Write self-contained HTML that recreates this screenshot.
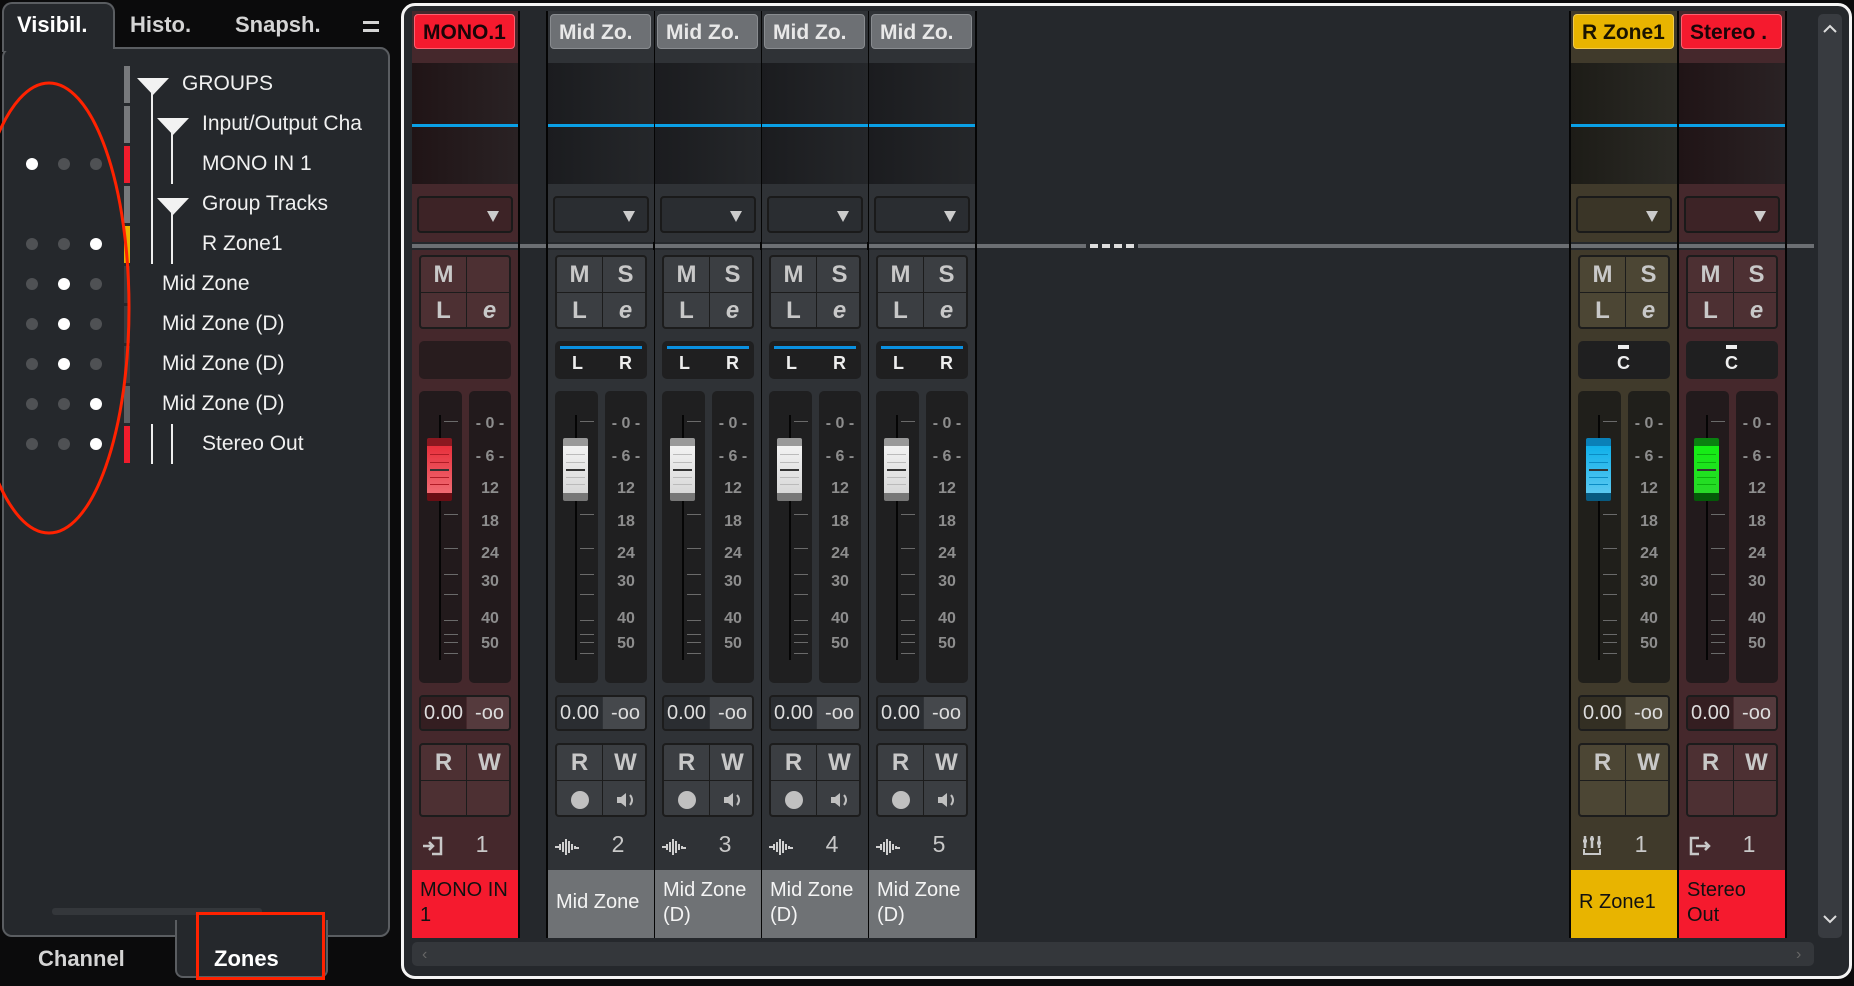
<!DOCTYPE html>
<html><head><meta charset="utf-8">
<style>
*{box-sizing:border-box;margin:0;padding:0}
body{width:1854px;height:986px;background:#0b0b0c;position:relative;overflow:hidden;font-family:"Liberation Sans",sans-serif;}
.a{position:absolute}
.tab{position:absolute;font-weight:bold;font-size:22px;color:#d4d4d4}
#lp{left:2px;top:47px;width:388px;height:890px;background:#25282c;border:2px solid #5a5d61;border-radius:10px}
.row{position:absolute;font-size:21px;color:#f0f0f0;white-space:nowrap}
.dot{position:absolute;width:12px;height:12px;border-radius:50%;background:#4f5154}
.dot.on{background:#fff}
.bar{position:absolute;left:124px;width:6px;height:37px}
.vl{position:absolute;width:2px;background:#eee}
.tri{position:absolute;width:0;height:0;border-left:16px solid transparent;border-right:16px solid transparent;border-top:17px solid #f2f2f2}
#mx{left:401px;top:3px;width:1451px;height:976px;border:3px solid #f4f4f4;border-radius:14px;background:#25282c;overflow:hidden}
.s{position:absolute;top:0;width:106px;height:940px}
.s .top{position:absolute;left:0;top:11px;width:106px;height:231px}
.s .bot{position:absolute;left:0;top:250px;width:106px;height:620px}
.lbl{position:absolute;left:2px;top:14px;width:101px;height:35px;border-radius:4px;font-weight:bold;font-size:21px;line-height:35px;padding-left:8px;white-space:nowrap;overflow:hidden}
.ins{position:absolute;left:0;top:63px;width:106px;height:121px}
.blue{position:absolute;left:0;top:124px;width:106px;height:3px;background:#0aa0e6}
.dd{position:absolute;left:5px;top:196px;width:96px;height:37px;border:2px solid #1a1a1a;border-radius:4px}
.dd:after{content:"";position:absolute;right:12px;top:13px;border-left:6px solid transparent;border-right:6px solid transparent;border-top:11px solid #ccc}
.g{position:absolute;left:7px;width:92px;height:74px;border:2px solid #1c1c1c;border-radius:4px;overflow:hidden}
.g div{position:absolute;width:45px;height:35px;font-weight:bold;font-size:24px;color:#c8c8c8;text-align:center;line-height:35px}
.g .c1{left:0;top:0}.g .c2{left:46px;top:0}.g .c3{left:0;top:36px}.g .c4{left:46px;top:36px}
.pan{position:absolute;left:7px;top:341px;width:92px;height:38px;background:#1f1f20;border-radius:5px}
.fb{position:absolute;left:7px;top:391px;width:43px;height:292px;background:#1f1f20;border-radius:5px}
.mb{position:absolute;left:57px;top:391px;width:42px;height:292px;background:#1f1f20;border-radius:5px}
.trk{position:absolute;left:27px;top:415px;width:2px;height:245px;background:#050505}
.tk{position:absolute;left:32px;width:14px;height:1px;background:#6a6a6a}
.cap{position:absolute;left:15px;top:438px;width:25px;height:63px;border-radius:2px}
.cap i{position:absolute;left:3px;width:19px;height:1px}
.sc{position:absolute;width:42px;text-align:center;left:57px;font-weight:bold;font-size:16px;color:#8d8d8d;white-space:nowrap}
.vol{position:absolute;left:7px;top:695px;width:92px;height:36px;border:2px solid #1c1c1c;border-radius:4px;overflow:hidden;font-size:20px;color:#ddd}
.vol span{position:absolute;top:0;height:32px;line-height:32px;width:45px;text-align:center}
.num{position:absolute;left:55px;top:831px;width:30px;text-align:center;font-size:23px;color:#c8c8c8}
.nm{position:absolute;left:0;top:870px;width:106px;height:68px;font-size:20px;line-height:25px;padding:8px 0 0 8px}
.sep{position:absolute;top:11px;width:2px;height:927px;background:#050505}
</style></head><body>

<div class="a" style="left:2px;top:2px;width:113px;height:50px;background:#25282c;border:2px solid #5a5d61;border-bottom:none;border-radius:10px 10px 0 0"></div>
<div class="tab" style="left:17px;top:12px;color:#fff">Visibil.</div>
<div class="tab" style="left:130px;top:12px">Histo.</div>
<div class="tab" style="left:235px;top:12px">Snapsh.</div>
<div class="a" style="left:363px;top:21px;width:16px;height:3px;background:#d4d4d4"></div>
<div class="a" style="left:363px;top:29px;width:16px;height:3px;background:#d4d4d4"></div>
<div class="a" id="lp"></div>
<div class="a" style="left:4px;top:45px;width:109px;height:6px;background:#25282c"></div>

<div class="dot on" style="left:26px;top:158px"></div><div class="dot" style="left:58px;top:158px"></div><div class="dot" style="left:90px;top:158px"></div>
<div class="dot" style="left:26px;top:238px"></div><div class="dot" style="left:58px;top:238px"></div><div class="dot on" style="left:90px;top:238px"></div>
<div class="dot" style="left:26px;top:278px"></div><div class="dot on" style="left:58px;top:278px"></div><div class="dot" style="left:90px;top:278px"></div>
<div class="dot" style="left:26px;top:318px"></div><div class="dot on" style="left:58px;top:318px"></div><div class="dot" style="left:90px;top:318px"></div>
<div class="dot" style="left:26px;top:358px"></div><div class="dot on" style="left:58px;top:358px"></div><div class="dot" style="left:90px;top:358px"></div>
<div class="dot" style="left:26px;top:398px"></div><div class="dot" style="left:58px;top:398px"></div><div class="dot on" style="left:90px;top:398px"></div>
<div class="dot" style="left:26px;top:438px"></div><div class="dot" style="left:58px;top:438px"></div><div class="dot on" style="left:90px;top:438px"></div>

<div class="bar" style="top:66px;background:#77797c"></div>
<div class="bar" style="top:106px;background:#77797c"></div>
<div class="bar" style="top:146px;background:#f01c2c"></div>
<div class="bar" style="top:186px;background:#77797c"></div>
<div class="bar" style="top:226px;background:#e8b400"></div>
<div class="bar" style="top:266px;background:#3a3c40"></div>
<div class="bar" style="top:306px;background:#3a3c40"></div>
<div class="bar" style="top:346px;background:#3a3c40"></div>
<div class="bar" style="top:386px;background:#5c5f63"></div>
<div class="bar" style="top:426px;background:#f01c2c"></div>

<div class="tri" style="left:137px;top:78px"></div>
<div class="vl" style="left:151px;top:92px;height:172px"></div>
<div class="tri" style="left:157px;top:118px"></div>
<div class="vl" style="left:171px;top:132px;height:52px"></div>
<div class="tri" style="left:157px;top:198px"></div>
<div class="vl" style="left:171px;top:212px;height:52px"></div>
<div class="vl" style="left:151px;top:424px;height:40px"></div>
<div class="vl" style="left:171px;top:424px;height:40px"></div>
<div class="row" style="left:182px;top:72px">GROUPS</div>
<div class="row" style="left:202px;top:112px">Input/Output Cha</div>
<div class="row" style="left:202px;top:152px">MONO IN 1</div>
<div class="row" style="left:202px;top:192px">Group Tracks</div>
<div class="row" style="left:202px;top:232px">R Zone1</div>
<div class="row" style="left:162px;top:272px">Mid Zone</div>
<div class="row" style="left:162px;top:312px">Mid Zone (D)</div>
<div class="row" style="left:162px;top:352px">Mid Zone (D)</div>
<div class="row" style="left:162px;top:392px">Mid Zone (D)</div>
<div class="row" style="left:202px;top:432px">Stereo Out</div>

<div class="a" style="left:52px;top:908px;width:210px;height:7px;background:#34373b;border-radius:3px"></div>

<svg class="a" style="left:0;top:0" width="200" height="560"><ellipse cx="49" cy="308" rx="80" ry="225" fill="none" stroke="#ff2200" stroke-width="3"/></svg>

<div class="a" style="left:175px;top:920px;width:153px;height:58px;background:#25282c;border:2px solid #5a5d61;border-top:none;border-radius:0 0 8px 8px"></div>
<div class="a" style="left:177px;top:930px;width:149px;height:10px;background:#25282c"></div>
<div class="tab" style="left:38px;top:946px">Channel</div>
<div class="tab" style="left:214px;top:946px;color:#fff">Zones</div>
<div class="a" style="left:196px;top:912px;width:129px;height:68px;border:3px solid #ff2200"></div>

<div class="a" id="mx"></div>
<div class="a" style="left:412px;top:244px;width:674px;height:4px;background:#6c6f73"></div>
<div class="a" style="left:1138px;top:244px;width:676px;height:4px;background:#6c6f73"></div>
<div class="a" style="left:1090px;top:244px;width:8px;height:4px;background:#ddd"></div>
<div class="a" style="left:1102px;top:244px;width:8px;height:4px;background:#ddd"></div>
<div class="a" style="left:1114px;top:244px;width:8px;height:4px;background:#ddd"></div>
<div class="a" style="left:1126px;top:244px;width:8px;height:4px;background:#ddd"></div>
<div class="a" style="left:412px;top:942px;width:1402px;height:24px;background:#34373b;border-radius:5px"></div>
<div class="a" style="left:422px;top:946px;color:#666;font-size:16px">&#8249;</div>
<div class="a" style="left:1796px;top:946px;color:#666;font-size:16px">&#8250;</div>
<div class="a" style="left:1818px;top:14px;width:24px;height:924px;background:#383b40;border-radius:5px"></div>
<svg class="a" style="left:1822px;top:22px" width="16" height="14"><path d="M2 10 L8 4 L14 10" fill="none" stroke="#ddd" stroke-width="2"/></svg>
<svg class="a" style="left:1822px;top:912px" width="16" height="14"><path d="M2 4 L8 10 L14 4" fill="none" stroke="#ddd" stroke-width="2"/></svg>

<div class="sep" style="left:518px"></div><div class="sep" style="left:546px"></div>
<div class="sep" style="left:653px"></div><div class="sep" style="left:760px"></div><div class="sep" style="left:867px"></div><div class="sep" style="left:975px"></div>
<div class="sep" style="left:1569px"></div><div class="sep" style="left:1677px"></div><div class="sep" style="left:1785px"></div>

<div class="s" style="left:412px">
 <div class="top" style="background:#45282c"></div><div class="bot" style="background:#45282c"></div>
 <div class="lbl" style="background:#f51a2e;border:1px solid #ff6070;color:#1a0508">MONO.1</div>
 <div class="ins" style="background:linear-gradient(90deg,#201416,#2a2224)"></div><div class="blue"></div>
 <div class="dd" style="background:#3d2326"></div>
 <div class="g" style="top:255px;background:#1c1c1c"><div class="c1" style="background:#4d3033">M</div><div class="c2" style="background:#4d3033"></div><div class="c3" style="background:#4d3033">L</div><div class="c4" style="background:#4d3033;font-style:italic">e</div></div>
 <div class="pan" style="background:#281c1e"></div>
 <div class="fb" style="background:#221a1c"></div><div class="mb" style="background:#221a1c"></div>
 <div class="trk"></div>
 <div class="tk" style="top:421px"></div><div class="tk" style="top:514px"></div><div class="tk" style="top:548px"></div><div class="tk" style="top:574px"></div><div class="tk" style="top:594px"></div><div class="tk" style="top:620px"></div><div class="tk" style="top:634px"></div><div class="tk" style="top:642px"></div><div class="tk" style="top:653px"></div>
 <div class="cap" style="background:linear-gradient(#8a1820 0,#8a1820 8px,#e8303c 8px,#f06a72 55px,#6a0e14 55px)"><i style="top:16px;background:#b01c26"></i><i style="top:24px;background:#b01c26"></i><i style="top:31px;background:#333;height:2px"></i><i style="top:39px;background:#b01c26"></i><i style="top:46px;background:#b01c26"></i></div>
 <div class="sc" style="top:415px">- 0 -</div><div class="sc" style="top:448px">- 6 -</div><div class="sc" style="top:480px">12</div><div class="sc" style="top:513px">18</div><div class="sc" style="top:545px">24</div><div class="sc" style="top:573px">30</div><div class="sc" style="top:610px">40</div><div class="sc" style="top:635px">50</div>
 <div class="vol"><span style="left:0;background:#341e21">0.00</span><span style="left:46px;background:#553a3d">-oo</span></div>
 <div class="g" style="top:743px;background:#1c1c1c"><div class="c1" style="background:#4d3033">R</div><div class="c2" style="background:#4d3033">W</div><div class="c3" style="background:#4d3033"></div><div class="c4" style="background:#4d3033"></div></div>
 <svg class="a" style="left:10px;top:836px" width="22" height="20"><path d="M1 10 H11 M7 6 L11 10 L7 14" fill="none" stroke="#c8c8c8" stroke-width="2.5"/><path d="M10 2 H19 V18 H10" fill="none" stroke="#c8c8c8" stroke-width="2.5"/></svg>
 <div class="num">1</div>
 <div class="nm" style="background:#f51a2e;color:#111">MONO IN<br>1</div>
</div>

<div class="s" style="left:548px">
 <div class="top" style="background:#2f3236"></div><div class="bot" style="background:#2f3236"></div>
 <div class="lbl" style="background:#6d7074;border:1px solid #888b8f;color:#e8e8e8">Mid Zo.</div>
 <div class="ins" style="background:linear-gradient(90deg,#1b1c1f,#25272a)"></div><div class="blue"></div>
 <div class="dd" style="background:#2a2d31"></div>
 <div class="g" style="top:255px;background:#1c1c1c"><div class="c1" style="background:#3b3e42">M</div><div class="c2" style="background:#3b3e42">S</div><div class="c3" style="background:#3b3e42">L</div><div class="c4" style="background:#3b3e42;font-style:italic">e</div></div>
 <div class="pan"><div class="a" style="left:5px;top:5px;width:82px;height:3px;background:#0a90e0"></div><div class="a" style="left:17px;top:12px;font-weight:bold;font-size:18px;color:#eee">L</div><div class="a" style="left:64px;top:12px;font-weight:bold;font-size:18px;color:#eee">R</div></div>
 <div class="fb"></div><div class="mb"></div><div class="trk"></div>
 <div class="tk" style="top:421px"></div><div class="tk" style="top:514px"></div><div class="tk" style="top:548px"></div><div class="tk" style="top:574px"></div><div class="tk" style="top:594px"></div><div class="tk" style="top:620px"></div><div class="tk" style="top:634px"></div><div class="tk" style="top:642px"></div><div class="tk" style="top:653px"></div>
 <div class="cap" style="background:linear-gradient(#999 0,#999 8px,#f2f2f2 8px,#d8d8d8 55px,#777 55px)"><i style="top:16px;background:#bbb"></i><i style="top:24px;background:#bbb"></i><i style="top:31px;background:#333;height:2px"></i><i style="top:39px;background:#bbb"></i><i style="top:46px;background:#bbb"></i></div>
 <div class="sc" style="top:415px">- 0 -</div><div class="sc" style="top:448px">- 6 -</div><div class="sc" style="top:480px">12</div><div class="sc" style="top:513px">18</div><div class="sc" style="top:545px">24</div><div class="sc" style="top:573px">30</div><div class="sc" style="top:610px">40</div><div class="sc" style="top:635px">50</div>
 <div class="vol"><span style="left:0;background:#2a2d31">0.00</span><span style="left:46px;background:#45484c">-oo</span></div>
 <div class="g" style="top:743px;background:#1c1c1c"><div class="c1" style="background:#3b3e42">R</div><div class="c2" style="background:#3b3e42">W</div><div class="c3" style="background:#3b3e42"><span style="display:inline-block;width:18px;height:18px;border-radius:50%;background:#c0c0c0;vertical-align:middle"></span></div><div class="c4" style="background:#3b3e42"><svg width="24" height="20" style="vertical-align:middle"><path d="M3 7 H7 L12 3 V17 L7 13 H3 Z" fill="#c0c0c0"/><path d="M16 5 Q20 10 16 15" fill="none" stroke="#c0c0c0" stroke-width="2"/></svg></div></div>
 <svg class="a" style="left:6px;top:836px" width="26" height="20"><path d="M1 11 H6 M6 8 V14 M9 6 V16 M12 3 V19 M15 5 V17 M18 8 V14 M21 10 V12 H25" stroke="#d0d0d0" stroke-width="2" fill="none"/></svg>
 <div class="num">2</div>
 <div class="nm" style="background:#6f7275;color:#f4f4f4;padding-top:20px">Mid Zone</div>
</div>

<div class="s" style="left:655px">
 <div class="top" style="background:#2f3236"></div><div class="bot" style="background:#2f3236"></div>
 <div class="lbl" style="background:#6d7074;border:1px solid #888b8f;color:#e8e8e8">Mid Zo.</div>
 <div class="ins" style="background:linear-gradient(90deg,#1b1c1f,#25272a)"></div><div class="blue"></div>
 <div class="dd" style="background:#2a2d31"></div>
 <div class="g" style="top:255px;background:#1c1c1c"><div class="c1" style="background:#3b3e42">M</div><div class="c2" style="background:#3b3e42">S</div><div class="c3" style="background:#3b3e42">L</div><div class="c4" style="background:#3b3e42;font-style:italic">e</div></div>
 <div class="pan"><div class="a" style="left:5px;top:5px;width:82px;height:3px;background:#0a90e0"></div><div class="a" style="left:17px;top:12px;font-weight:bold;font-size:18px;color:#eee">L</div><div class="a" style="left:64px;top:12px;font-weight:bold;font-size:18px;color:#eee">R</div></div>
 <div class="fb"></div><div class="mb"></div><div class="trk"></div>
 <div class="tk" style="top:421px"></div><div class="tk" style="top:514px"></div><div class="tk" style="top:548px"></div><div class="tk" style="top:574px"></div><div class="tk" style="top:594px"></div><div class="tk" style="top:620px"></div><div class="tk" style="top:634px"></div><div class="tk" style="top:642px"></div><div class="tk" style="top:653px"></div>
 <div class="cap" style="background:linear-gradient(#999 0,#999 8px,#f2f2f2 8px,#d8d8d8 55px,#777 55px)"><i style="top:16px;background:#bbb"></i><i style="top:24px;background:#bbb"></i><i style="top:31px;background:#333;height:2px"></i><i style="top:39px;background:#bbb"></i><i style="top:46px;background:#bbb"></i></div>
 <div class="sc" style="top:415px">- 0 -</div><div class="sc" style="top:448px">- 6 -</div><div class="sc" style="top:480px">12</div><div class="sc" style="top:513px">18</div><div class="sc" style="top:545px">24</div><div class="sc" style="top:573px">30</div><div class="sc" style="top:610px">40</div><div class="sc" style="top:635px">50</div>
 <div class="vol"><span style="left:0;background:#2a2d31">0.00</span><span style="left:46px;background:#45484c">-oo</span></div>
 <div class="g" style="top:743px;background:#1c1c1c"><div class="c1" style="background:#3b3e42">R</div><div class="c2" style="background:#3b3e42">W</div><div class="c3" style="background:#3b3e42"><span style="display:inline-block;width:18px;height:18px;border-radius:50%;background:#c0c0c0;vertical-align:middle"></span></div><div class="c4" style="background:#3b3e42"><svg width="24" height="20" style="vertical-align:middle"><path d="M3 7 H7 L12 3 V17 L7 13 H3 Z" fill="#c0c0c0"/><path d="M16 5 Q20 10 16 15" fill="none" stroke="#c0c0c0" stroke-width="2"/></svg></div></div>
 <svg class="a" style="left:6px;top:836px" width="26" height="20"><path d="M1 11 H6 M6 8 V14 M9 6 V16 M12 3 V19 M15 5 V17 M18 8 V14 M21 10 V12 H25" stroke="#d0d0d0" stroke-width="2" fill="none"/></svg>
 <div class="num">3</div>
 <div class="nm" style="background:#6f7275;color:#f4f4f4">Mid Zone<br>(D)</div>
</div>

<div class="s" style="left:762px">
 <div class="top" style="background:#2f3236"></div><div class="bot" style="background:#2f3236"></div>
 <div class="lbl" style="background:#6d7074;border:1px solid #888b8f;color:#e8e8e8">Mid Zo.</div>
 <div class="ins" style="background:linear-gradient(90deg,#1b1c1f,#25272a)"></div><div class="blue"></div>
 <div class="dd" style="background:#2a2d31"></div>
 <div class="g" style="top:255px;background:#1c1c1c"><div class="c1" style="background:#3b3e42">M</div><div class="c2" style="background:#3b3e42">S</div><div class="c3" style="background:#3b3e42">L</div><div class="c4" style="background:#3b3e42;font-style:italic">e</div></div>
 <div class="pan"><div class="a" style="left:5px;top:5px;width:82px;height:3px;background:#0a90e0"></div><div class="a" style="left:17px;top:12px;font-weight:bold;font-size:18px;color:#eee">L</div><div class="a" style="left:64px;top:12px;font-weight:bold;font-size:18px;color:#eee">R</div></div>
 <div class="fb"></div><div class="mb"></div><div class="trk"></div>
 <div class="tk" style="top:421px"></div><div class="tk" style="top:514px"></div><div class="tk" style="top:548px"></div><div class="tk" style="top:574px"></div><div class="tk" style="top:594px"></div><div class="tk" style="top:620px"></div><div class="tk" style="top:634px"></div><div class="tk" style="top:642px"></div><div class="tk" style="top:653px"></div>
 <div class="cap" style="background:linear-gradient(#999 0,#999 8px,#f2f2f2 8px,#d8d8d8 55px,#777 55px)"><i style="top:16px;background:#bbb"></i><i style="top:24px;background:#bbb"></i><i style="top:31px;background:#333;height:2px"></i><i style="top:39px;background:#bbb"></i><i style="top:46px;background:#bbb"></i></div>
 <div class="sc" style="top:415px">- 0 -</div><div class="sc" style="top:448px">- 6 -</div><div class="sc" style="top:480px">12</div><div class="sc" style="top:513px">18</div><div class="sc" style="top:545px">24</div><div class="sc" style="top:573px">30</div><div class="sc" style="top:610px">40</div><div class="sc" style="top:635px">50</div>
 <div class="vol"><span style="left:0;background:#2a2d31">0.00</span><span style="left:46px;background:#45484c">-oo</span></div>
 <div class="g" style="top:743px;background:#1c1c1c"><div class="c1" style="background:#3b3e42">R</div><div class="c2" style="background:#3b3e42">W</div><div class="c3" style="background:#3b3e42"><span style="display:inline-block;width:18px;height:18px;border-radius:50%;background:#c0c0c0;vertical-align:middle"></span></div><div class="c4" style="background:#3b3e42"><svg width="24" height="20" style="vertical-align:middle"><path d="M3 7 H7 L12 3 V17 L7 13 H3 Z" fill="#c0c0c0"/><path d="M16 5 Q20 10 16 15" fill="none" stroke="#c0c0c0" stroke-width="2"/></svg></div></div>
 <svg class="a" style="left:6px;top:836px" width="26" height="20"><path d="M1 11 H6 M6 8 V14 M9 6 V16 M12 3 V19 M15 5 V17 M18 8 V14 M21 10 V12 H25" stroke="#d0d0d0" stroke-width="2" fill="none"/></svg>
 <div class="num">4</div>
 <div class="nm" style="background:#6f7275;color:#f4f4f4">Mid Zone<br>(D)</div>
</div>

<div class="s" style="left:869px">
 <div class="top" style="background:#2f3236"></div><div class="bot" style="background:#2f3236"></div>
 <div class="lbl" style="background:#6d7074;border:1px solid #888b8f;color:#e8e8e8">Mid Zo.</div>
 <div class="ins" style="background:linear-gradient(90deg,#1b1c1f,#25272a)"></div><div class="blue"></div>
 <div class="dd" style="background:#2a2d31"></div>
 <div class="g" style="top:255px;background:#1c1c1c"><div class="c1" style="background:#3b3e42">M</div><div class="c2" style="background:#3b3e42">S</div><div class="c3" style="background:#3b3e42">L</div><div class="c4" style="background:#3b3e42;font-style:italic">e</div></div>
 <div class="pan"><div class="a" style="left:5px;top:5px;width:82px;height:3px;background:#0a90e0"></div><div class="a" style="left:17px;top:12px;font-weight:bold;font-size:18px;color:#eee">L</div><div class="a" style="left:64px;top:12px;font-weight:bold;font-size:18px;color:#eee">R</div></div>
 <div class="fb"></div><div class="mb"></div><div class="trk"></div>
 <div class="tk" style="top:421px"></div><div class="tk" style="top:514px"></div><div class="tk" style="top:548px"></div><div class="tk" style="top:574px"></div><div class="tk" style="top:594px"></div><div class="tk" style="top:620px"></div><div class="tk" style="top:634px"></div><div class="tk" style="top:642px"></div><div class="tk" style="top:653px"></div>
 <div class="cap" style="background:linear-gradient(#999 0,#999 8px,#f2f2f2 8px,#d8d8d8 55px,#777 55px)"><i style="top:16px;background:#bbb"></i><i style="top:24px;background:#bbb"></i><i style="top:31px;background:#333;height:2px"></i><i style="top:39px;background:#bbb"></i><i style="top:46px;background:#bbb"></i></div>
 <div class="sc" style="top:415px">- 0 -</div><div class="sc" style="top:448px">- 6 -</div><div class="sc" style="top:480px">12</div><div class="sc" style="top:513px">18</div><div class="sc" style="top:545px">24</div><div class="sc" style="top:573px">30</div><div class="sc" style="top:610px">40</div><div class="sc" style="top:635px">50</div>
 <div class="vol"><span style="left:0;background:#2a2d31">0.00</span><span style="left:46px;background:#45484c">-oo</span></div>
 <div class="g" style="top:743px;background:#1c1c1c"><div class="c1" style="background:#3b3e42">R</div><div class="c2" style="background:#3b3e42">W</div><div class="c3" style="background:#3b3e42"><span style="display:inline-block;width:18px;height:18px;border-radius:50%;background:#c0c0c0;vertical-align:middle"></span></div><div class="c4" style="background:#3b3e42"><svg width="24" height="20" style="vertical-align:middle"><path d="M3 7 H7 L12 3 V17 L7 13 H3 Z" fill="#c0c0c0"/><path d="M16 5 Q20 10 16 15" fill="none" stroke="#c0c0c0" stroke-width="2"/></svg></div></div>
 <svg class="a" style="left:6px;top:836px" width="26" height="20"><path d="M1 11 H6 M6 8 V14 M9 6 V16 M12 3 V19 M15 5 V17 M18 8 V14 M21 10 V12 H25" stroke="#d0d0d0" stroke-width="2" fill="none"/></svg>
 <div class="num">5</div>
 <div class="nm" style="background:#6f7275;color:#f4f4f4">Mid Zone<br>(D)</div>
</div>

<div class="s" style="left:1571px">
 <div class="top" style="background:#403a2b"></div><div class="bot" style="background:#403a2b"></div>
 <div class="lbl" style="background:#e8b400;border:1px solid #f2cc50;color:#1a1400">R Zone1</div>
 <div class="ins" style="background:linear-gradient(90deg,#1d1c17,#2b2a25)"></div><div class="blue"></div>
 <div class="dd" style="background:#3a3527"></div>
 <div class="g" style="top:255px;background:#1c1c1c"><div class="c1" style="background:#4c4634">M</div><div class="c2" style="background:#4c4634">S</div><div class="c3" style="background:#4c4634">L</div><div class="c4" style="background:#4c4634;font-style:italic">e</div></div>
 <div class="pan"><div class="a" style="left:40px;top:4px;width:11px;height:4px;background:#eee"></div><div class="a" style="left:39px;top:12px;font-weight:bold;font-size:18px;color:#eee">C</div></div>
 <div class="fb" style="background:#201f1b"></div><div class="mb" style="background:#201f1b"></div><div class="trk"></div>
 <div class="tk" style="top:421px"></div><div class="tk" style="top:514px"></div><div class="tk" style="top:548px"></div><div class="tk" style="top:574px"></div><div class="tk" style="top:594px"></div><div class="tk" style="top:620px"></div><div class="tk" style="top:634px"></div><div class="tk" style="top:642px"></div><div class="tk" style="top:653px"></div>
 <div class="cap" style="background:linear-gradient(#0a80b8 0,#0a80b8 8px,#10b0ea 8px,#5ac8f0 55px,#085a80 55px)"><i style="top:16px;background:#0a8cc4"></i><i style="top:24px;background:#0a8cc4"></i><i style="top:31px;background:#333;height:2px"></i><i style="top:39px;background:#0a8cc4"></i><i style="top:46px;background:#0a8cc4"></i></div>
 <div class="sc" style="top:415px">- 0 -</div><div class="sc" style="top:448px">- 6 -</div><div class="sc" style="top:480px">12</div><div class="sc" style="top:513px">18</div><div class="sc" style="top:545px">24</div><div class="sc" style="top:573px">30</div><div class="sc" style="top:610px">40</div><div class="sc" style="top:635px">50</div>
 <div class="vol"><span style="left:0;background:#332f23">0.00</span><span style="left:46px;background:#524c3c">-oo</span></div>
 <div class="g" style="top:743px;background:#1c1c1c"><div class="c1" style="background:#4c4634">R</div><div class="c2" style="background:#4c4634">W</div><div class="c3" style="background:#4c4634"></div><div class="c4" style="background:#4c4634"></div></div>
 <svg class="a" style="left:10px;top:834px" width="22" height="22"><path d="M4 2 V14 M11 2 V14 M18 2 V14" stroke="#c8c8c8" stroke-width="2.5"/><path d="M2 7 H6 M9 5 H13 M16 9 H20" stroke="#c8c8c8" stroke-width="3"/><path d="M3 15 V20 H19 V15" fill="none" stroke="#c8c8c8" stroke-width="2"/></svg>
 <div class="num">1</div>
 <div class="nm" style="background:#e8b400;color:#111;padding-top:20px">R Zone1</div>
</div>

<div class="s" style="left:1679px">
 <div class="top" style="background:#45282c"></div><div class="bot" style="background:#45282c"></div>
 <div class="lbl" style="background:#f51a2e;border:1px solid #ff6070;color:#1a0508">Stereo .</div>
 <div class="ins" style="background:linear-gradient(90deg,#201416,#2a2224)"></div><div class="blue"></div>
 <div class="dd" style="background:#3d2326"></div>
 <div class="g" style="top:255px;background:#1c1c1c"><div class="c1" style="background:#4d3033">M</div><div class="c2" style="background:#4d3033">S</div><div class="c3" style="background:#4d3033">L</div><div class="c4" style="background:#4d3033;font-style:italic">e</div></div>
 <div class="pan"><div class="a" style="left:40px;top:4px;width:11px;height:4px;background:#eee"></div><div class="a" style="left:39px;top:12px;font-weight:bold;font-size:18px;color:#eee">C</div></div>
 <div class="fb" style="background:#221a1c"></div><div class="mb" style="background:#221a1c"></div><div class="trk"></div>
 <div class="tk" style="top:421px"></div><div class="tk" style="top:514px"></div><div class="tk" style="top:548px"></div><div class="tk" style="top:574px"></div><div class="tk" style="top:594px"></div><div class="tk" style="top:620px"></div><div class="tk" style="top:634px"></div><div class="tk" style="top:642px"></div><div class="tk" style="top:653px"></div>
 <div class="cap" style="background:linear-gradient(#0a8010 0,#0a8010 8px,#14ee14 8px,#28d828 55px,#045a08 55px)"><i style="top:16px;background:#0cb00c"></i><i style="top:24px;background:#0cb00c"></i><i style="top:31px;background:#333;height:2px"></i><i style="top:39px;background:#0cb00c"></i><i style="top:46px;background:#0cb00c"></i></div>
 <div class="sc" style="top:415px">- 0 -</div><div class="sc" style="top:448px">- 6 -</div><div class="sc" style="top:480px">12</div><div class="sc" style="top:513px">18</div><div class="sc" style="top:545px">24</div><div class="sc" style="top:573px">30</div><div class="sc" style="top:610px">40</div><div class="sc" style="top:635px">50</div>
 <div class="vol"><span style="left:0;background:#341e21">0.00</span><span style="left:46px;background:#553a3d">-oo</span></div>
 <div class="g" style="top:743px;background:#1c1c1c"><div class="c1" style="background:#4d3033">R</div><div class="c2" style="background:#4d3033">W</div><div class="c3" style="background:#4d3033"></div><div class="c4" style="background:#4d3033"></div></div>
 <svg class="a" style="left:10px;top:836px" width="24" height="20"><path d="M10 2 H2 V18 H10" fill="none" stroke="#c8c8c8" stroke-width="2.5"/><path d="M7 10 H20 M16 6 L20 10 L16 14" fill="none" stroke="#c8c8c8" stroke-width="2.5"/></svg>
 <div class="num">1</div>
 <div class="nm" style="background:#f51a2e;color:#111">Stereo<br>Out</div>
</div>

</body></html>
